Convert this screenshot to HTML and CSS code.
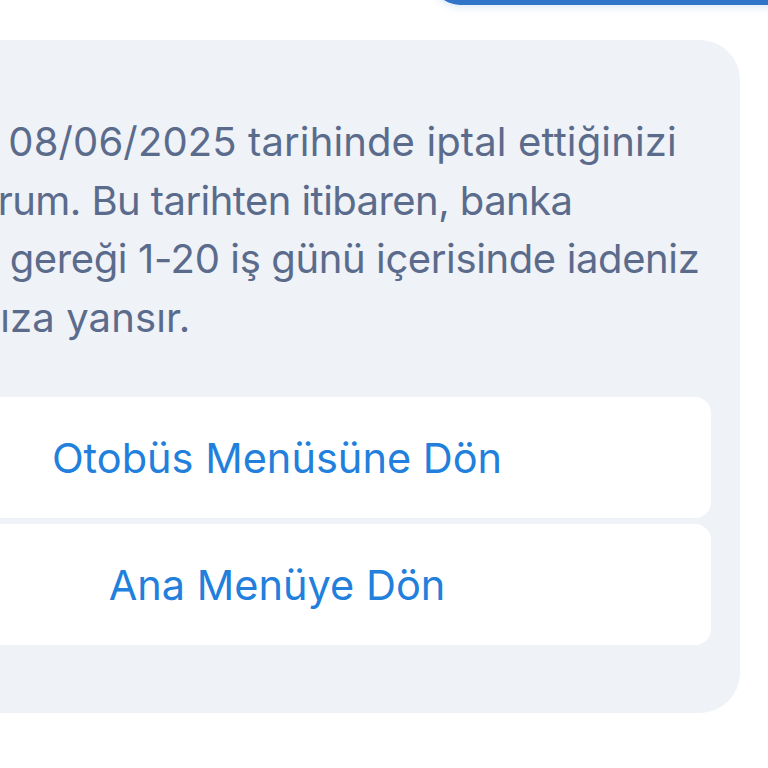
FILE: index.html
```html
<!DOCTYPE html>
<html lang="tr">
<head>
<meta charset="utf-8">
<link rel="stylesheet" href="styles.css">
</head>
<body>
<div class="stage">
  <div class="topbtn"></div>
  <div class="card">
    <p class="msg"><span class="line">Biletinizi 08/06/2025 tarihinde iptal ettiğinizi</span><span class="line l2">onaylıyorum. Bu tarihten itibaren, banka</span><span class="line l3">işlemleri gereği 1-20 iş günü içerisinde iadeniz</span><span class="line l4">hesabınıza yansır.</span></p>
    <div class="actions">
      <div class="btn">Otobüs Menüsüne Dön</div>
      <div class="btn">Ana Menüye Dön</div>
    </div>
  </div>
</div>
</body>
</html>
```
FILE: styles.css
```css
html, body {
  margin: 0;
  padding: 0;
  background: #ffffff;
  overflow: hidden;
  width: 768px;
  height: 768px;
}
body {
  font-family: Inter, "Noto Sans", sans-serif;
}
.stage {
  margin-left: -186px;
  width: 926px;
  padding-top: 1px;
}
.topbtn {
  margin-top: -56px;
  margin-left: 618px;
  width: 400px;
  height: 60px;
  background: #2f74c9;
  border-radius: 28px;
  box-shadow: 0 2px 8px rgba(47, 116, 201, 0.18);
}
.card {
  margin-top: 35px;
  background: #eff2f7;
  border-radius: 40px;
  padding: 73px 29px 68px 29px;
}
.msg {
  margin: 0 0 50px -4px;
  font-size: 40px;
  line-height: 58.5px;
  color: #5b6b8c;
  white-space: nowrap;
  letter-spacing: 0.12px;
}
.line {
  display: block;
}
.l2 {
  letter-spacing: -0.56px;
  padding-left: 6px;
}
.l3 {
  letter-spacing: -0.38px;
  padding-left: 6px;
}
.l4 {
  padding-left: 12px;
}
.actions {
  display: flex;
  flex-direction: column;
  gap: 6px;
}
.btn {
  height: 121px;
  background: #ffffff;
  border-radius: 16px;
  display: flex;
  align-items: center;
  justify-content: center;
  font-size: 41.5px;
  color: #2280dc;
}
```
